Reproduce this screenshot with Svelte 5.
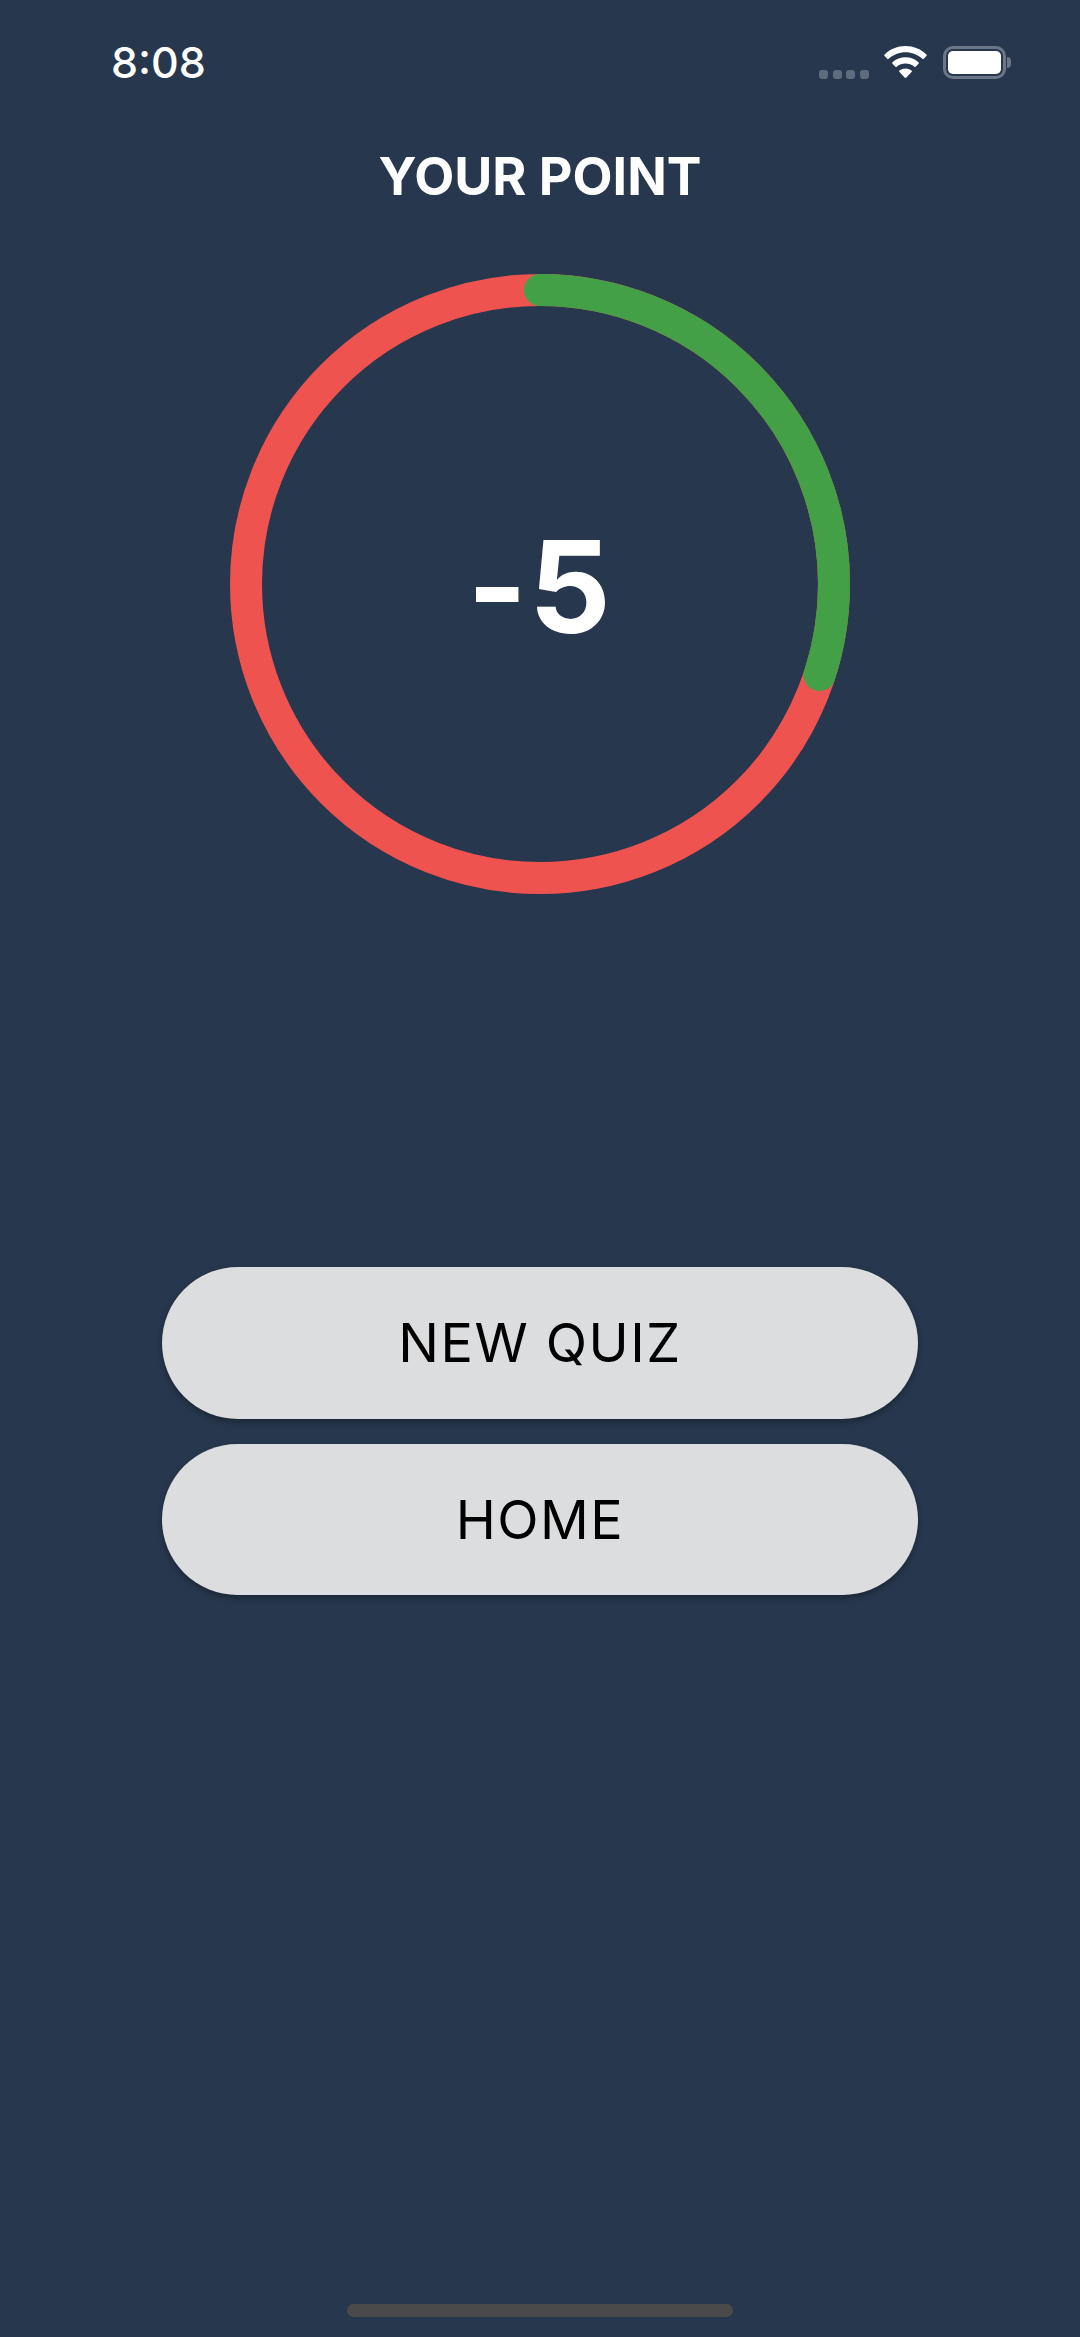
<script lang="ts">
  const score = -5;
  const progress = 0.3;
  const radius = 294;
  const circumference = 2 * Math.PI * radius;
  const dash = `${circumference * progress} ${circumference}`;
  const actions = ['NEW QUIZ', 'HOME'];
</script>

<div class="page">
  <header class="status">
    <span class="time">8:08</span>
    <div class="indicators">
      <div class="signal">
        <i></i><i></i><i></i><i></i>
      </div>
      <svg class="wifi" viewBox="0 0 43 32" fill="#fff">
        <path d="M21.5 0C13.6 0 6.4 3 .6 8.4c-.5.5-.5 1.100 0 1.600l2.600 2.800c.4.5 1 .5 1.500 0C9.300 8.600 15.100 6.200 21.500 6.200s12.200 2.400 16.800 6.600c.5.5 1.100.5 1.500 0l2.600-2.800c.5-.5.5-1.100 0-1.600C36.600 3 29.400 0 21.500 0z"/>
        <path d="M21.500 11.200c-4.900 0-9.400 1.800-13 5-.5.5-.5 1.100 0 1.600l2.600 2.800c.4.5 1 .5 1.500.1 2.500-2.100 5.600-3.200 8.900-3.200s6.400 1.100 8.900 3.200c.5.4 1.100.4 1.500-.1l2.600-2.800c.5-.5.5-1.100 0-1.600-3.600-3.200-8.100-5-13-5z"/>
        <path d="M21.500 22.400c-2.200 0-4.300.8-6 2.200-.5.5-.5 1.100 0 1.500l5.100 5.500c.5.500 1.300.500 1.800 0l5.100-5.500c.5-.4.5-1 0-1.500-1.700-1.400-3.800-2.200-6-2.200z"/>
      </svg>
      <div class="battery">
        <div class="battery-body"><div class="battery-fill"></div></div>
        <div class="battery-nub"></div>
      </div>
    </div>
  </header>

  <h1 class="title">YOUR POINT</h1>

  <div class="ring">
    <svg viewBox="0 0 620 620">
      <circle cx="310" cy="310" r={radius} class="track" />
      <circle
        cx="310"
        cy="310"
        r={radius}
        class="value"
        stroke-dasharray={dash}
        transform="rotate(-90 310 310)"
      />
    </svg>
    <span class="score">{score}</span>
  </div>

  <div class="actions">
    {#each actions as label}
      <button class="btn">{label}</button>
    {/each}
  </div>

  <div class="home-bar"></div>
</div>

<style>
  :global(body) {
    margin: 0;
    background: #27374d;
  }
  .page {
    width: 1080px;
    height: 2337px;
    background: #27374d;
    display: flex;
    flex-direction: column;
    align-items: center;
    font-family: Inter, "Liberation Sans", sans-serif;
    overflow: hidden;
  }
  .status {
    align-self: stretch;
    height: 44px;
    padding: 40px 69px 0 112px;
    display: flex;
    justify-content: space-between;
    align-items: center;
    flex-shrink: 0;
  }
  .time {
    color: #fff;
    font-size: 43px;
    font-weight: 500;
    line-height: 44px;
    margin-left: -1px;
  }
  .indicators {
    display: flex;
    align-items: flex-start;
  }
  .signal {
    display: flex;
    gap: 4.700px;
    margin: 24px 15px 0 0;
  }
  .signal i {
    display: block;
    width: 9px;
    height: 9px;
    border-radius: 3px;
    background: #5f6c7d;
  }
  .wifi {
    width: 43px;
    height: 32px;
    margin-right: 16px;
  }
  .battery {
    display: flex;
    align-items: center;
  }
  .battery-body {
    width: 63px;
    height: 33px;
    box-sizing: border-box;
    border: 3px solid #6b7787;
    border-radius: 10px;
    padding: 2px;
  }
  .battery-fill {
    height: 100%;
    background: #fff;
    border-radius: 5px;
  }
  .battery-nub {
    width: 4px;
    height: 11px;
    margin-left: 1px;
    background: #6b7787;
    border-radius: 0 4px 4px 0;
  }
  .title {
    margin: 63px 0 0;
    color: #fff;
    font-size: 52px;
    font-weight: 700;
    line-height: 60px;
  }
  .ring {
    width: 620px;
    height: 620px;
    margin-top: 67px;
    display: grid;
    place-items: center;
    flex-shrink: 0;
  }
  .ring > * {
    grid-area: 1 / 1;
  }
  .ring svg {
    width: 620px;
    height: 620px;
    display: block;
  }
  .track,
  .value {
    fill: none;
    stroke-width: 32;
  }
  .track {
    stroke: #ef5350;
  }
  .value {
    stroke: #43a047;
    stroke-linecap: round;
  }
  .score {
    color: #fff;
    font-size: 128px;
    font-weight: 700;
    line-height: 1;
    padding-top: 5px;
    letter-spacing: 2px;
  }
  .actions {
    margin-top: 373px;
    display: flex;
    flex-direction: column;
    gap: 25px;
  }
  .btn {
    width: 756px;
    height: 151.500px;
    border: none;
    border-radius: 76px;
    background: #dcdddf;
    color: #000;
    font-family: inherit;
    font-size: 54px;
    font-weight: 400;
    letter-spacing: 1.500px;
    padding: 0;
    box-shadow: 0 3px 6px rgba(0, 0, 0, 0.3);
  }
  .home-bar {
    margin-top: auto;
    margin-bottom: 20px;
    width: 386px;
    height: 13px;
    border-radius: 7px;
    background: #4a4a4a;
  }
</style>
